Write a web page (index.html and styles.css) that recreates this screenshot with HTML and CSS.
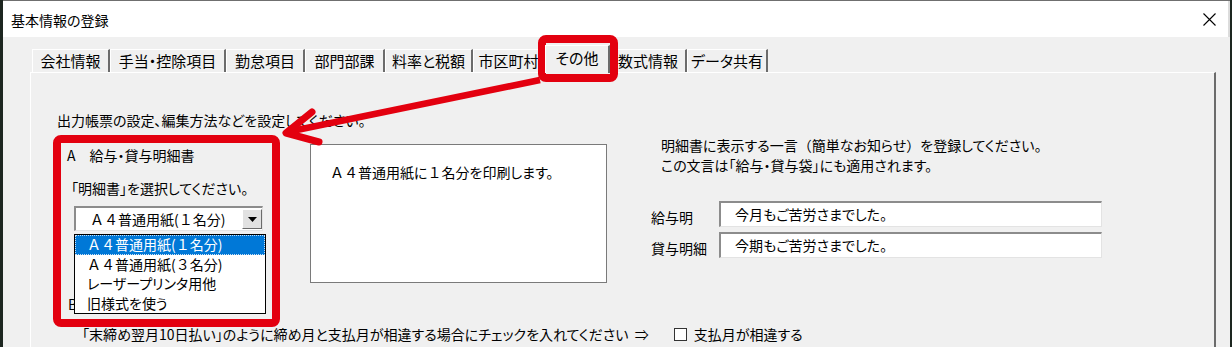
FILE: index.html
```html
<!DOCTYPE html>
<html lang="ja">
<head>
    <meta charset="UTF-8">
    <title>基本情報の登録</title>
    <link rel="stylesheet" href="styles.css">
</head>
<body>
    <div class="window">
        <div class="titlebar">
            <span class="title">基本情報の登録</span>
            <svg class="close" width="13" height="13" viewBox="0 0 13 13">
                <path d="M0.5 0.5 L12.5 12.5 M12.5 0.5 L0.5 12.5" stroke="#000" stroke-width="1.1" fill="none"/>
            </svg>
        </div>

        <div class="tabs">
            <div class="tab tab-company">会社情報</div>
            <div class="tab tab-allowance">手当・控除項目</div>
            <div class="tab tab-attendance">勤怠項目</div>
            <div class="tab tab-section">部門部課</div>
            <div class="tab tab-rate">料率と税額</div>
            <div class="tab tab-city">市区町村</div>
            <div class="tab tab-other active">その他</div>
            <div class="tab tab-formula">数式情報</div>
            <div class="tab tab-share">データ共有</div>
        </div>

        <div class="panel">
            <p class="intro">出力帳票の設定、編集方法などを設定してください。</p>

            <div class="main">
                <div class="group">
                    <div class="group-title">A　給与・貸与明細書</div>
                    <div class="prompt">「明細書」を選択してください。</div>
                    <div class="combo">
                        <span class="combo-text"><span class="fw">Ａ４</span>普通用紙(<span class="fw">１</span>名分)</span>
                        <span class="combo-btn">
                            <svg width="9" height="5" viewBox="0 0 9 5"><path d="M0 0 H9 L4.5 5 Z" fill="#000"/></svg>
                        </span>
                    </div>
                    <!-- open list of the combo box -->
                    <ul class="dropdown">
                        <li class="selected"><span class="fw">Ａ４</span>普通用紙(<span class="fw">１</span>名分)</li>
                        <li><span class="fw">Ａ４</span>普通用紙(<span class="fw">３</span>名分)</li>
                        <li>レーザープリンタ用他</li>
                        <li>旧様式を使う</li>
                    </ul>
                    <div class="group-b">B</div>
                </div>

                <div class="desc"><span class="fw">Ａ４</span>普通用紙に<span class="fw">１</span>名分を印刷します。</div>

                <div class="notes">
                    <p>明細書に表示する一言<span class="fw">（</span>簡単なお知らせ<span class="fw">）</span>を登録してください。</p>
                    <p>この文言は「給与・貸与袋」にも適用されます。</p>
                    <div class="field">
                        <label>給与明</label>
                        <div class="input">今月もご苦労さまでした。</div>
                    </div>
                    <div class="field">
                        <label>貸与明細</label>
                        <div class="input">今期もご苦労さまでした。</div>
                    </div>
                </div>
            </div>

            <div class="check-row">
                <span>「末締め翌月10日払い」のように締め月と支払月が相違する場合にチェックを入れてください &nbsp;⇒</span>
                <label class="check"><span class="box"></span>支払月が相違する</label>
            </div>
        </div>
    </div>

    <!-- red annotation drawn over the screenshot -->
    <svg class="annot" width="1232" height="347" viewBox="0 0 1232 347">
        <rect x="542" y="39" width="72" height="39" rx="4" fill="none" stroke="#e3000f" stroke-width="8"/>
        <rect x="57" y="139" width="219" height="184" rx="4" fill="none" stroke="#e3000f" stroke-width="8"/>
        <line x1="540" y1="80" x2="292" y2="131" stroke="#e3000f" stroke-width="6.5"/>
        <polyline points="312,112 286,133 319,142" fill="none" stroke="#e3000f" stroke-width="7" stroke-linecap="round" stroke-linejoin="round"/>
    </svg>
</body>
</html>
```

FILE: styles.css
```css
body {
    margin: 0;
    background-color: #1d2620;
    font-family: "Noto Sans CJK JP", sans-serif;
    font-size: 14px;
    font-feature-settings: "palt";
    color: #000;
    width: 1232px;
    height: 347px;
    overflow: hidden;
    position: relative;
}
p {
    margin: 0;
}
.fw {
    font-feature-settings: normal;
}
.window {
    margin-left: 3px;
    width: 1227px;
    height: 346px;
    background-color: #f0f0f0;
    border-top: 1px solid #6f6f6f;
    overflow: hidden;
}

/* title bar */
.titlebar {
    height: 36px;
    background-color: #fff;
    display: flex;
    align-items: center;
    justify-content: space-between;
    padding: 0 12px 0 8px;
    border-right: 2px solid #dcdcdc;
}
.title {
    line-height: 20px;
    padding-top: 2px;
}
.close {
    display: block;
    margin-top: 1px;
}

/* tabs */
.tabs {
    height: 35px;
    box-sizing: border-box;
    display: flex;
    align-items: flex-end;
    padding-left: 29px;
}
.tab {
    height: 23px;
    box-sizing: border-box;
    border-top: 1px solid #fff;
    border-left: 1px solid #fff;
    border-right: 2px solid #6b6b6b;
    font-size: 15px;
    line-height: 22px;
    text-align: center;
    white-space: nowrap;
}
.tab-company { width: 78px; }
.tab-allowance { width: 116px; }
.tab-attendance { width: 79px; }
.tab-section { width: 80px; }
.tab-rate { width: 88px; }
.tab-city { width: 72px; }
.tab-other { width: 65px; }
.tab-formula { width: 77px; }
.tab-share { width: 81px; }
.tab.active {
    height: 28px;
    margin-bottom: -1px;
    line-height: 24px;
    position: relative;
    z-index: 1;
    background-color: #f0f0f0;
}

/* tab page */
.panel {
    margin-left: 27px;
    width: 1186px;
    height: 275px;
    box-sizing: border-box;
    border-top: 1px solid #fff;
    border-left: 1px solid #fff;
    border-right: 2px solid #6b6b6b;
    padding: 37px 0 0 26px;
}
.intro {
    line-height: 20px;
}
.main {
    display: flex;
    align-items: flex-start;
    margin-top: 5px;
}

/* left group */
.group {
    width: 253px;
    padding-top: 10px;
    position: relative;
}
.group-title {
    line-height: 20px;
    padding-left: 10px;
}
.prompt {
    line-height: 20px;
    margin-top: 13px;
    padding-left: 14px;
}
.combo {
    margin: 8px 0 0 17px;
    width: 189px;
    height: 25px;
    box-sizing: border-box;
    background-color: #fff;
    border-top: 2px solid #8c8c8c;
    border-left: 2px solid #8c8c8c;
    border-right: 1px solid #e3e3e3;
    border-bottom: 1px solid #e3e3e3;
    display: flex;
    align-items: center;
    justify-content: space-between;
}
.combo-text {
    padding-left: 14px;
    line-height: 20px;
}
.combo-btn {
    width: 20px;
    height: 20px;
    box-sizing: border-box;
    background-color: #e1e1e1;
    border-top: 1px solid #fff;
    border-left: 1px solid #fff;
    border-right: 1px solid #6b6b6b;
    border-bottom: 1px solid #6b6b6b;
    display: flex;
    align-items: center;
    justify-content: center;
}
.combo-btn svg {
    display: block;
}
.dropdown {
    position: absolute;
    left: 17px;
    top: 99px;
    width: 192px;
    margin: 0;
    padding: 0;
    list-style: none;
    background-color: #fff;
    border: 1px solid #000;
    box-sizing: border-box;
    z-index: 2;
}
.dropdown li {
    height: 19.5px;
    line-height: 19.5px;
    padding-left: 12px;
    box-sizing: border-box;
}
.dropdown li.selected {
    background-color: #0078d7;
    color: #fff;
    outline: 1px dotted #c9e0f5;
    outline-offset: -1px;
}
.group-b {
    margin-top: 63px;
    padding-left: 11px;
    line-height: 20px;
}

/* description box */
.desc {
    margin-top: 9px;
    width: 297px;
    height: 139px;
    box-sizing: border-box;
    background-color: #fff;
    border: 1px solid #7a7a7a;
    padding: 17px 0 0 19px;
    line-height: 20px;
}

/* right notes */
.notes {
    margin-left: 43px;
    width: 455px;
}
.notes p {
    line-height: 20px;
    padding-left: 11px;
}
.field {
    display: flex;
    margin-top: 5px;
}
.field:first-of-type {
    margin-top: 26px;
}
.field label {
    width: 69px;
    padding: 6px 0 0 1px;
    box-sizing: border-box;
    line-height: 20px;
}
.input {
    width: 383px;
    height: 26px;
    box-sizing: border-box;
    background-color: #fff;
    border-top: 2px solid #8c8c8c;
    border-left: 2px solid #8c8c8c;
    border-right: 1px solid #e3e3e3;
    border-bottom: 1px solid #e3e3e3;
    padding-left: 14px;
    line-height: 22px;
}

/* bottom row */
.check-row {
    margin: 10px 0 0 25px;
    display: flex;
    align-items: center;
    line-height: 20px;
    white-space: nowrap;
}
.check {
    display: flex;
    align-items: center;
    margin-left: 25px;
}
.box {
    width: 13px;
    height: 13px;
    box-sizing: border-box;
    background-color: #fff;
    border: 1px solid #333;
    margin-right: 7px;
}

/* annotation overlay */
.annot {
    position: absolute;
    left: 0;
    top: 0;
    pointer-events: none;
}
```
